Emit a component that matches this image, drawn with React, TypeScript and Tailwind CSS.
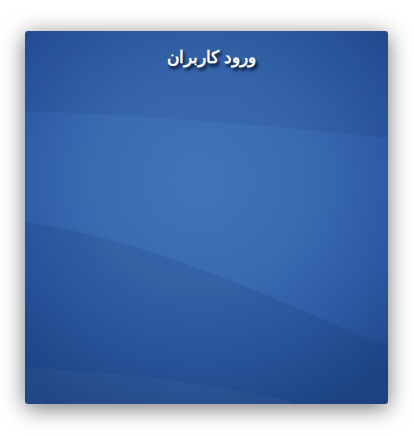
import React from "react";

export default function App() {
  return (
    <div className="w-[414px] h-[436px] bg-white pt-[31px] pl-[25px]">
      <div className="relative w-[363px] h-[373px] rounded-[3px] overflow-hidden shadow-[0_4px_22px_rgba(0,0,0,0.55)] bg-[radial-gradient(ellipse_75%_70%_at_48%_40%,#4174b9_0%,#3a6bb1_40%,#2c5aa3_70%,#1f4789_100%)]">
        <svg className="absolute inset-0" width="363" height="373" viewBox="0 0 363 373">
          <path d="M0 0 H363 V107 C250 95 120 84 0 80 Z" fill="rgba(10,30,80,0.08)" />
          <path d="M0 191 C60 200 120 217 180 240 C240 262 300 290 363 316 V373 H0 Z" fill="rgba(10,30,80,0.12)" />
          <path d="M0 337 C90 340 180 352 262 369 L270 373 H0 Z" fill="rgba(255,255,255,0.03)" />
        </svg>
        <div className="relative pt-[13px] pl-[10px] text-center">
          <span
            dir="rtl"
            className="text-white font-black text-[17px] [font-family:'Noto_Sans',sans-serif] [text-shadow:2px_3px_3px_#061633]"
          >
            ورود کاربران
          </span>
        </div>
      </div>
    </div>
  );
}
